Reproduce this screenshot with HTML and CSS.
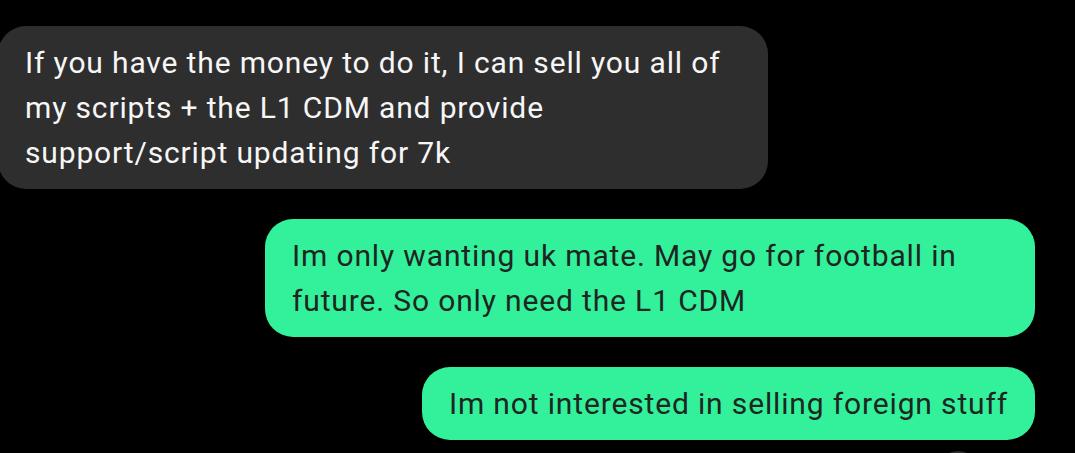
FILE: index.html
```html
<!DOCTYPE html>
<html lang="en">
<head>
<meta charset="utf-8">
<title>Chat</title>
<link rel="stylesheet" href="styles.css">
</head>
<body>
<div class="chat">
  <div class="row row-in">
    <div class="bubble bubble-in">If you have the money to do it, I can sell you all of my scripts + the L1 CDM and provide support/script updating for 7k</div>
  </div>
  <div class="row row-out">
    <div class="bubble bubble-out">Im only wanting uk mate. May go for football in future. So only need the L1 CDM</div>
  </div>
  <div class="row row-out">
    <div class="bubble bubble-out">Im not interested in selling foreign stuff</div>
  </div>
  <div class="row row-out row-extra">
    <div class="dot"></div>
  </div>
</div>
</body>
</html>
```

FILE: styles.css
```css
html, body {
  margin: 0;
  padding: 0;
  background: #000;
  overflow: hidden;
}
.chat {
  width: 1075px;
  height: 453px;
  box-sizing: border-box;
  padding-top: 26px;
  display: flex;
  flex-direction: column;
  gap: 30px;
  font-family: Roboto, "Liberation Sans", sans-serif;
  font-size: 30px;
  line-height: 45px;
  overflow: hidden;
}
.row {
  display: flex;
  flex-shrink: 0;
}
.row-in {
  justify-content: flex-start;
  margin-left: -2px;
}
.row-out {
  justify-content: flex-end;
  padding-right: 40px;
}
.bubble {
  max-width: 770px;
  box-sizing: border-box;
  padding: 14px 27px 14px 27px;
  border-radius: 28px;
  letter-spacing: 0.85px;
}
.bubble-in {
  background: #2e2e2e;
  color: #f6f6f6;
}
.bubble-out {
  background: #33f19b;
  color: #1f2622;
}
.row-extra {
  margin-top: -19px;
  padding-right: 97px;
}
.dot {
  width: 40px;
  height: 40px;
  border-radius: 50%;
  background: #2e2e2e;
}
```
